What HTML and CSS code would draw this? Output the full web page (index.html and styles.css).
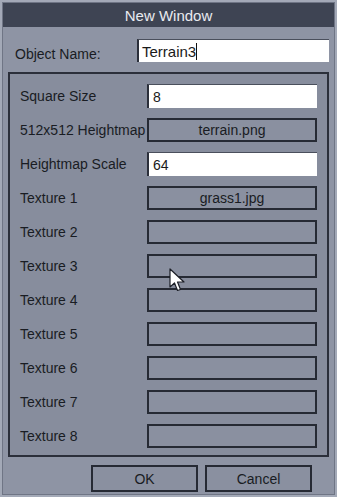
FILE: index.html
```html
<!DOCTYPE html>
<html lang="en">
<head>
    <meta charset="UTF-8">
    <meta name="viewport" content="width=device-width, initial-scale=1.0">
    <title>New Window</title>
    <link rel="stylesheet" href="styles.css">
</head>
<body>
    <div class="window">
        <div class="title">New Window</div>

        <div class="name-row">
            <div class="name-label">Object Name:</div>
            <div class="name-input">Terrain3<span class="caret"></span></div>
        </div>

        <div class="panel">
            <div class="row">
                <div class="label">Square Size</div>
                <div class="field input">8</div>
            </div>
            <div class="row">
                <div class="label">512x512 Heightmap</div>
                <div class="field box">terrain.png</div>
            </div>
            <div class="row">
                <div class="label">Heightmap Scale</div>
                <div class="field input">64</div>
            </div>
            <div class="row">
                <div class="label">Texture 1</div>
                <div class="field box">grass1.jpg</div>
            </div>
            <div class="row">
                <div class="label">Texture 2</div>
                <div class="field box"></div>
            </div>
            <div class="row">
                <div class="label">Texture 3</div>
                <div class="field box"></div>
            </div>
            <div class="row">
                <div class="label">Texture 4</div>
                <div class="field box"></div>
            </div>
            <div class="row">
                <div class="label">Texture 5</div>
                <div class="field box"></div>
            </div>
            <div class="row">
                <div class="label">Texture 6</div>
                <div class="field box"></div>
            </div>
            <div class="row">
                <div class="label">Texture 7</div>
                <div class="field box"></div>
            </div>
            <div class="row">
                <div class="label">Texture 8</div>
                <div class="field box"></div>
            </div>
        </div>

        <div class="buttons">
            <div class="button">OK</div>
            <div class="button">Cancel</div>
        </div>
    </div>

    <svg class="cursor" width="17" height="26" viewBox="0 0 17 26">
        <path d="M1 1 L1 19 L5.5 15 L8.5 22.5 L11.5 21.5 L8.5 14 L15 14 Z" fill="#ffffff" stroke="#1c1f27" stroke-width="1.2" stroke-linejoin="round"/>
    </svg>
</body>
</html>
```

FILE: styles.css
```css
* {
    margin: 0;
    padding: 0;
    box-sizing: border-box;
    font-family: 'Liberation Sans', Arial, sans-serif;
}

body {
    width: 337px;
    height: 497px;
    background-color: #a3a9b7;
    position: relative;
    overflow: hidden;
}

.window {
    margin: 2px 2px 0 2px;
    height: 493px;
    background: #8e94a4;
    border: 1px solid #6f7585;
    display: flex;
    flex-direction: column;
}

.title {
    height: 24px;
    background: #3e4453;
    color: #e9ebf0;
    font-size: 15px;
    display: flex;
    align-items: center;
    justify-content: center;
}

.name-row {
    display: flex;
    align-items: center;
    margin-top: 12px;
    padding-left: 12px;
    padding-right: 5px;
    height: 23px;
}

.name-label {
    width: 122px;
    font-size: 14px;
    color: #191c23;
    padding-top: 6px;
}

.name-input {
    flex: 1;
    height: 23px;
    background: #ffffff;
    border-left: 2px solid #2b2f3a;
    border-top: 1px solid #4a4f5c;
    font-size: 15px;
    color: #1a1a1a;
    padding-left: 3px;
    display: flex;
    align-items: center;
}

.caret {
    display: inline-block;
    width: 1px;
    height: 17px;
    background: #111;
}

.panel {
    margin: 10px 5px 0 5px;
    border: 2px solid #2b2f3a;
    background: #878d9d;
    padding: 10px 10px 7px 10px;
    display: flex;
    flex-direction: column;
    gap: 10px;
}

.row {
    display: flex;
    align-items: center;
    height: 24px;
}

.label {
    width: 127px;
    font-size: 14px;
    color: #191c23;
    white-space: nowrap;
}

.field {
    flex: 1;
    height: 24px;
    font-size: 14px;
    display: flex;
    align-items: center;
}

.input {
    background: #ffffff;
    border-left: 2px solid #2b2f3a;
    border-top: 1px solid #4a4f5c;
    padding-left: 4px;
    color: #1a1a1a;
}

.box {
    background: #8a90a0;
    border: 2px solid #262a34;
    justify-content: center;
    color: #191c23;
}

.buttons {
    display: flex;
    justify-content: flex-end;
    gap: 7px;
    padding-right: 22px;
    margin-top: 8px;
}

.button {
    width: 107px;
    height: 27px;
    background: #8a90a0;
    border: 2px solid #262a34;
    font-size: 14px;
    color: #191c23;
    display: flex;
    align-items: center;
    justify-content: center;
}

.cursor {
    position: absolute;
    left: 169px;
    top: 268px;
}
```
